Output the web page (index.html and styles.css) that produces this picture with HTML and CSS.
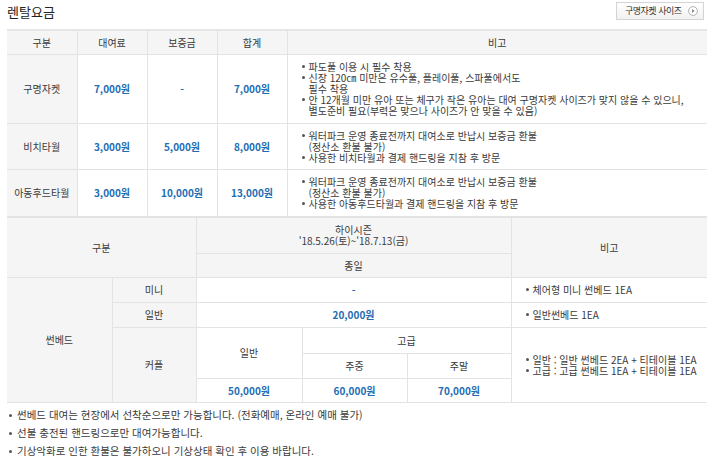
FILE: index.html
```html
<!DOCTYPE html>
<html lang="ko">
<head>
<meta charset="utf-8">
<link rel="stylesheet" href="styles.css">
</head>
<body>
<div class="page">
  <div class="titlebar">
    <h2 class="title">렌탈요금</h2>
    <a class="btn" href="#"><span class="btn-txt">구명자켓 사이즈</span>
      <svg class="btn-ico" width="10" height="10" viewBox="0 0 10 10"><circle cx="5" cy="5" r="4.4" fill="#fff" stroke="#a8a8a8" stroke-width="0.9"/><path d="M4 3 L6.6 5 L4 7 Z" fill="#888"/></svg>
    </a>
  </div>

  <table class="tbl t1">
    <colgroup><col class="c70"><col class="c70"><col class="c70"><col class="c70"><col></colgroup>
    <thead>
      <tr class="h24"><th>구분</th><th>대여료</th><th>보증금</th><th>합계</th><th>비고</th></tr>
    </thead>
    <tbody>
      <tr class="r1">
        <th>구명자켓</th><td class="price">7,000원</td><td class="price">-</td><td class="price">7,000원</td>
        <td class="note"><ul>
          <li>파도풀 이용 시 필수 착용</li>
          <li>신장 120㎝ 미만은 유수풀, 플레이풀, 스파풀에서도<br>필수 착용</li>
          <li>안 12개월 미만 유아 또는 체구가 작은 유아는 대여 구명자켓 사이즈가 맞지 않을 수 있으니,<br>별도준비 필요(부력은 맞으나 사이즈가 안 맞을 수 있음)</li>
        </ul></td>
      </tr>
      <tr class="r2">
        <th>비치타월</th><td class="price">3,000원</td><td class="price">5,000원</td><td class="price">8,000원</td>
        <td class="note"><ul>
          <li>워터파크 운영 종료전까지 대여소로 반납시 보증금 환불<br>(정산소 환불 불가)</li>
          <li>사용한 비치타월과 결제 핸드링을 지참 후 방문</li>
        </ul></td>
      </tr>
      <tr class="r3">
        <th>아동후드타월</th><td class="price">3,000원</td><td class="price">10,000원</td><td class="price">13,000원</td>
        <td class="note"><ul>
          <li>워터파크 운영 종료전까지 대여소로 반납시 보증금 환불<br>(정산소 환불 불가)</li>
          <li>사용한 아동후드타월과 결제 핸드링을 지참 후 방문</li>
        </ul></td>
      </tr>
    </tbody>
  </table>

  <table class="tbl t2">
    <colgroup><col class="w105"><col class="w84"><col class="w106"><col class="w105"><col class="w104"><col></colgroup>
    <thead>
      <tr class="h36">
        <th colspan="2" rowspan="2">구분</th>
        <th colspan="3" class="season">하이시즌<br>'18.5.26(토)~'18.7.13(금)</th>
        <th rowspan="2">비고</th>
      </tr>
      <tr class="h24"><th colspan="3">종일</th></tr>
    </thead>
    <tbody>
      <tr class="h25">
        <th rowspan="5">썬베드</th>
        <th>미니</th>
        <td colspan="3" class="price">-</td>
        <td class="note2"><ul><li>체어형 미니 썬베드 1EA</li></ul></td>
      </tr>
      <tr class="h25">
        <th>일반</th>
        <td colspan="3" class="price">20,000원</td>
        <td class="note2"><ul><li>일반썬베드 1EA</li></ul></td>
      </tr>
      <tr class="h26">
        <th rowspan="3">커플</th>
        <td rowspan="2">일반</td>
        <td colspan="2">고급</td>
        <td rowspan="3" class="note2"><ul><li>일반 : 일반 썬베드 2EA + 티테이블 1EA</li><li>고급 : 고급 썬베드 1EA + 티테이블 1EA</li></ul></td>
      </tr>
      <tr class="h25"><td>주중</td><td>주말</td></tr>
      <tr class="h24"><td class="price">50,000원</td><td class="price">60,000원</td><td class="price">70,000원</td></tr>
    </tbody>
  </table>

  <ul class="notes">
    <li>썬베드 대여는 현장에서 선착순으로만 가능합니다. (전화예매, 온라인 예매 불가)</li>
    <li>선불 충전된 핸드링으로만 대여가능합니다.</li>
    <li>기상악화로 인한 환불은 불가하오니 기상상태 확인 후 이용 바랍니다.</li>
  </ul>
</div>
</body>
</html>
```

FILE: styles.css
```css
* { box-sizing: border-box; }
html, body { margin: 0; padding: 0; background: #fff; }
body {
  font-family: "Noto Sans CJK KR", "Noto Sans", sans-serif;
  color: #3a3a3a;
  font-size: 10px;
}
.page { padding: 0 13px 0 7px; width: 720px; }

.titlebar {
  height: 29px;
  display: flex;
  justify-content: space-between;
  align-items: flex-start;
}
.title {
  margin: 3px 0 0 0;
  font-size: 13px;
  font-weight: normal;
  line-height: 18px;
  color: #222;
}
.btn {
  margin: 2px 3px 0 0;
  height: 18px;
  width: 88px;
  display: flex;
  align-items: center;
  justify-content: space-between;
  padding: 0 5px 0 8px;
  border: 1px solid #d4d4d4;
  background: linear-gradient(#ffffff, #f1f1f1);
  color: #333;
  text-decoration: none;
}
.btn-txt {
  white-space: nowrap;
  font-size: 9px;
  line-height: 12px;
  letter-spacing: -0.5px;
}
.btn-ico { display: block; flex: none; }

.tbl {
  width: 700px;
  border-collapse: collapse;
  table-layout: fixed;
  border-top: 2px solid #e6e6e6;
}
.tbl th, .tbl td {
  border: 1px solid #e3e3e3;
  padding: 0;
  text-align: center;
  vertical-align: middle;
  font-weight: normal;
  font-size: 10px;
  line-height: 11px;
}
.tbl tr > :first-child { border-left: none; }
.tbl tr > :last-child { border-right: none; }
.tbl th { background: #f5f5f5; color: #3a3a3a; }
.tbl td { background: #fff; color: #3a3a3a; }
.tbl td.price { color: #1d6db3; font-weight: bold; }

.c70 { width: 70px; }
.w105 { width: 105px; }
.w84 { width: 84px; }
.w106 { width: 106px; }
.w104 { width: 104px; }

.h24 { height: 24px; }
.h25 { height: 25px; }
.h26 { height: 26px; }
.h36 { height: 36px; }
.r1 { height: 69px; }
.r2 { height: 46px; }
.r3 { height: 47px; }

.t2 { border-top: 1px solid #e3e3e3; }

.tbl td.note { text-align: left; padding-left: 14px; }
.tbl td.note2 { text-align: left; padding-left: 14px; }
.tbl ul { list-style: none; margin: 0; padding: 0; }
.tbl li { position: relative; padding-left: 7px; line-height: 11px; }
.tbl li::before {
  content: "";
  position: absolute;
  left: 0;
  top: 4px;
  width: 3px;
  height: 3px;
  border-radius: 50%;
  background: #555;
}

.notes {
  list-style: none;
  margin: 3px 0 0 0;
  padding: 0;
  font-size: 10.5px;
  color: #3a3a3a;
}
.notes li { position: relative; padding-left: 10px; line-height: 18px; }
.notes li::before {
  content: "";
  position: absolute;
  left: 2px;
  top: 8px;
  width: 3px;
  height: 3px;
  border-radius: 50%;
  background: #555;
}
```
